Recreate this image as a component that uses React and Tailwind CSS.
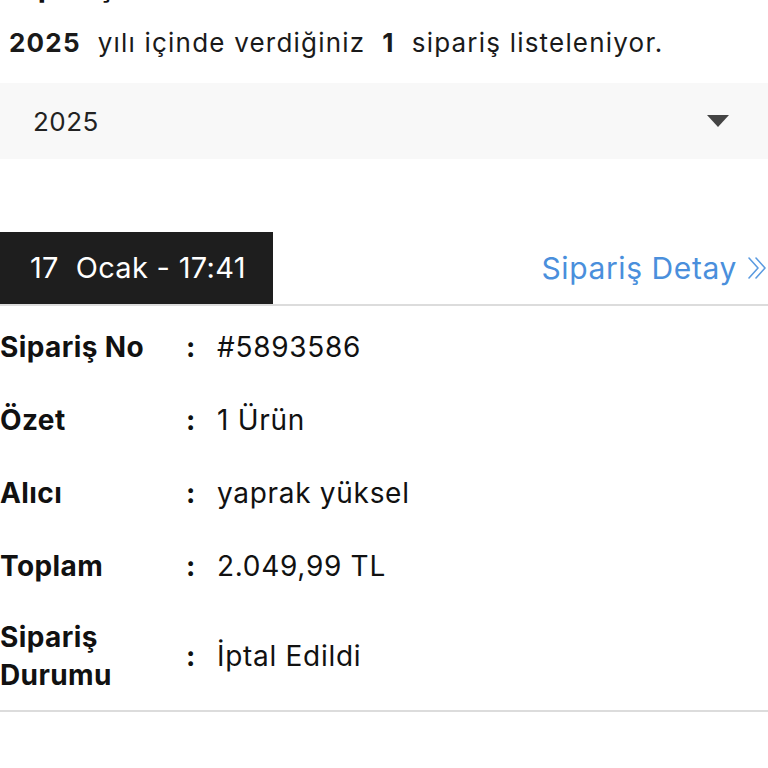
export default function App() {
  const rows = [
    { label: "Sipariş No", value: "#5893586" },
    { label: "Özet", value: "1 Ürün" },
    { label: "Alıcı", value: "yaprak yüksel" },
    { label: "Toplam", value: "2.049,99 TL" },
  ];
  return (
    <div className="w-[768px] h-[768px] overflow-hidden bg-white text-[#111]" style={{ fontFamily: "Inter, 'Noto Sans', sans-serif" }}>
      <div className="h-[7px] overflow-hidden">
        <div className="-mt-[31px] pl-[9px] text-[30px] font-bold leading-[34px] tracking-[0.5px]">Siparişlerim</div>
      </div>
      <div className="pl-[9px] pt-[21px] text-[26px] leading-[30px] tracking-[1.2px] text-[#1a1a1a]">
        <span className="font-bold">2025</span>&nbsp; yılı içinde verdiğiniz&nbsp; <span className="font-bold">1</span>&nbsp; sipariş listeleniyor.
      </div>
      <div className="mt-[25px] h-[76px] bg-[#f8f8f8] flex items-center justify-between pl-[33px] pr-[39px]">
        <span className="text-[26px] tracking-[0.5px] text-[#222]">2025</span>
        <svg width="22" height="12" viewBox="0 0 22 12"><path d="M0 0 L22 0 L11 12 Z" fill="#444" /></svg>
      </div>
      <div className="mt-[73px] flex items-center justify-between border-b-2 border-[#dcdcdc]">
        <div className="w-[273px] h-[72px] bg-[#1e1e1e] text-white text-[29px] tracking-[0.3px] flex items-center pl-[30px]">17&nbsp; Ocak - 17:41</div>
        <div className="flex items-center gap-[11px] text-[30px] tracking-[0.6px] text-[#4a8fdc]">
          <span>Sipariş Detay</span>
          <svg width="20" height="22" viewBox="0 0 20 22" fill="none" stroke="#5b9be0" strokeWidth="1.6" strokeLinecap="round" strokeLinejoin="round">
            <path d="M1 1 L10 11 L1 21" />
            <path d="M8 1 L17 11 L8 21" />
          </svg>
        </div>
      </div>
      <div className="border-b-2 border-[#dcdcdc]">
        {rows.map((r, i) => (
          <div key={i} className={`flex items-center h-[73px] ${i === 0 ? "mt-[4px]" : ""}`}>
            <div className="w-[186px] text-[28px] font-bold tracking-[0.4px]">{r.label}</div>
            <div className="w-[31px] text-[28px] font-bold">:</div>
            <div className="text-[28px] tracking-[0.7px]">{r.value}</div>
          </div>
        ))}
        <div className="flex items-center h-[108px]">
          <div className="w-[186px] text-[28px] font-bold leading-[38px] tracking-[0.4px]">Sipariş<br />Durumu</div>
          <div className="w-[31px] text-[28px] font-bold">:</div>
          <div className="text-[28px] tracking-[0.7px]">İptal Edildi</div>
        </div>
      </div>
    </div>
  );
}
